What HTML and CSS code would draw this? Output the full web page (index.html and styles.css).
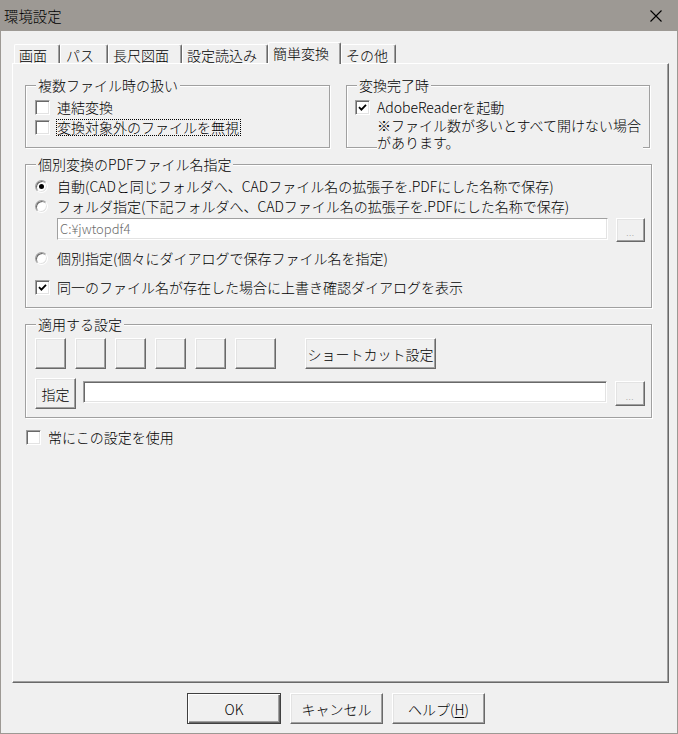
FILE: index.html
```html
<!DOCTYPE html>
<html lang="ja">
<head>
<meta charset="utf-8">
<title>環境設定</title>
<link rel="stylesheet" href="styles.css">
</head>
<body>
<div class="window">
  <div class="titlebar">
    <span class="title">環境設定</span>
    <svg class="close" width="12" height="12" viewBox="0 0 12 12"><path d="M0.5 0.5 L11.5 11.5 M11.5 0.5 L0.5 11.5" stroke="#000" stroke-width="1.1" fill="none"/></svg>
  </div>
  <div class="frame">
    <div class="tabs">
      <div class="tab t1">画面</div>
      <div class="tab t2">パス</div>
      <div class="tab t3">長尺図面</div>
      <div class="tab t4">設定読込み</div>
      <div class="tab t5 active">簡単変換</div>
      <div class="tab t6">その他</div>
    </div>
    <div class="panel">
      <div class="row-top">
        <div class="group g1">
          <div class="gtitle">複数ファイル時の扱い</div>
          <div class="opt first"><span class="box"></span><span>連結変換</span></div>
          <div class="opt"><span class="box"></span><span class="focus">変換対象外のファイルを無視</span></div>
        </div>
        <div class="group g2">
          <div class="gtitle">変換完了時</div>
          <div class="opt first"><span class="box on"><svg width="9" height="9" viewBox="0 0 9 9"><path d="M1 4.2 L3.4 6.6 L8 1.8" stroke="#000" stroke-width="1.8" fill="none"/></svg></span><span class="latin">AdobeReaderを起動</span></div>
          <div class="note">※ファイル数が多いとすべて開けない場合<br>があります。</div>
        </div>
      </div>

      <div class="group g3">
        <div class="gtitle">個別変換のPDFファイル名指定</div>
        <div class="opt first"><span class="rb on"></span><span>自動(CADと同じフォルダへ、CADファイル名の拡張子を.PDFにした名称で保存)</span></div>
        <div class="opt"><span class="rb"></span><span>フォルダ指定(下記フォルダへ、CADファイル名の拡張子を.PDFにした名称で保存)</span></div>
        <div class="pathrow">
          <div class="edit dis path">C:¥jwtopdf4</div>
          <div class="btn ell e1">...</div>
        </div>
        <div class="opt r3"><span class="rb"></span><span>個別指定(個々にダイアログで保存ファイル名を指定)</span></div>
        <div class="opt r4"><span class="box on"><svg width="9" height="9" viewBox="0 0 9 9"><path d="M1 4.2 L3.4 6.6 L8 1.8" stroke="#000" stroke-width="1.8" fill="none"/></svg></span><span>同一のファイル名が存在した場合に上書き確認ダイアログを表示</span></div>
      </div>

      <div class="group g4">
        <div class="gtitle">適用する設定</div>
        <div class="btnrow">
          <div class="btn sq"></div>
          <div class="btn sq"></div>
          <div class="btn sq"></div>
          <div class="btn sq"></div>
          <div class="btn sq"></div>
          <div class="btn sq wide"></div>
          <div class="btn shortcut">ショートカット設定</div>
        </div>
        <div class="specrow">
          <div class="btn spec">指定</div>
          <div class="edit specfield"></div>
          <div class="btn ell e2">...</div>
        </div>
      </div>

      <div class="opt always"><span class="box"></span><span>常にこの設定を使用</span></div>
    </div>
    <div class="footer">
      <div class="btn fbtn default">OK</div>
      <div class="btn fbtn">キャンセル</div>
      <div class="btn fbtn">ヘルプ(<u>H</u>)</div>
    </div>
  </div>
</div>
</body>
</html>
```
FILE: styles.css
```css
* { box-sizing: border-box; }
html, body { margin: 0; padding: 0; }
body {
  width: 678px;
  height: 734px;
  overflow: hidden;
  background: #f0f0f0;
  font-family: "Noto Sans CJK JP", "Noto Sans", sans-serif;
  font-size: 14px;
  font-weight: 300;
  color: #000;
}
.window {
  width: 678px;
  height: 734px;
  display: flex;
  flex-direction: column;
  background: #f0f0f0;
}
.titlebar {
  height: 31px;
  flex: none;
  background: #9d9994;
  display: flex;
  align-items: center;
  justify-content: space-between;
  padding: 0 16px 1px 4px;
}
.title { line-height: 17px; font-size: 14.4px; }
.close { display: block; margin-top: 1px; }

.frame {
  flex: 1;
  border: 1px solid #9d9994;
  border-top: 0;
  padding: 11px 8px 0 11px;
}

/* tabs */
.tabs {
  display: flex;
  align-items: flex-end;
  height: 21px;
  margin-left: 2px;
}
.tab {
  height: 19px;
  border-top: 1px solid #fff;
  border-left: 1px solid #fff;
  border-right: 1px solid #696969;
  box-shadow: inset -1px 0 #a0a0a0;
  border-radius: 2px 2px 0 0;
  padding: 2px 0 0 4px;
  line-height: 16px;
  white-space: nowrap;
}
.tab.active {
  height: 22px;
  margin-bottom: -1px;
  background: #f0f0f0;
  position: relative;
  z-index: 1;
  padding-left: 4px;
}
.t1 { width: 46px; }
.t2 { width: 48px; padding-left: 5px; }
.t3 { width: 74px; }
.t4 { width: 86px; }
.t5 { width: 73px; }
.t6 { width: 55px; }

/* panel */
.panel {
  height: 620px;
  border: 1px solid;
  border-color: #fff #696969 #696969 #fff;
  box-shadow: inset -1px -1px #a0a0a0;
  padding: 21px 0 0 12px;
}
.row-top {
  display: flex;
  gap: 16px;
  align-items: stretch;
}
.group {
  border: 1px solid #a0a0a0;
  box-shadow: 1px 1px 0 #fff, inset 1px 1px 0 #fff;
  padding: 0 0 10px 9px;
}
.g1 { width: 305px; }
.g2 { width: 304px; padding-left: 8px; }
.g3, .g4 { width: 627px; margin-top: 16px; }
.g4 { padding-bottom: 8px; }
.gtitle {
  width: fit-content;
  height: 16px;
  margin: -9px 0 0 1px;
  padding: 0 2px;
  line-height: 16px;
  background: #f0f0f0;
  white-space: nowrap;
}
.g2 .gtitle { margin-left: 2px; }

.opt {
  display: flex;
  align-items: center;
  height: 20px;
  white-space: nowrap;
}
.opt.first { margin-top: 4px; }
.opt.r3 { margin-top: 6px; }
.opt.r4 { margin-top: 9px; }

.box {
  width: 15px;
  height: 15px;
  flex: none;
  margin-right: 7px;
  background: #fff;
  border: 1px solid;
  border-color: #a0a0a0 #fff #fff #a0a0a0;
  box-shadow: inset 1px 1px #696969, inset -1px -1px #e3e3e3;
  display: flex;
  align-items: center;
  justify-content: center;
}
.box svg { display: block; }

.rb {
  width: 13px;
  height: 13px;
  flex: none;
  margin-right: 9px;
  border-radius: 50%;
  background: #fff;
  border: 1px solid;
  border-color: #a0a0a0 #fff #fff #a0a0a0;
  box-shadow: inset 1px 1px #696969, inset -1px -1px #e3e3e3;
  display: flex;
  align-items: center;
  justify-content: center;
}
.rb.on::after {
  content: "";
  width: 5px;
  height: 5px;
  border-radius: 50%;
  background: #000;
}

.focus {
  border: 1px dotted #000;
  line-height: 15px;
  margin-left: -1px;
  padding-right: 1px;
}

.note {
  width: 266px;
  margin: 0 0 -14px 22px;
  line-height: 17px;
  background: #f0f0f0;
  white-space: nowrap;
}

/* edits & buttons */
.edit {
  height: 22px;
  background: #fff;
  border: 1px solid;
  border-color: #a0a0a0 #fff #fff #a0a0a0;
  box-shadow: inset 1px 1px #696969, inset -1px -1px #e3e3e3;
}
.edit.dis {
  box-shadow: inset -1px -1px #e3e3e3;
  color: #6d6d6d;
  padding-left: 2px;
  line-height: 19px;
  font-size: 13px;
}
.pathrow {
  display: flex;
  gap: 8px;
  margin: 2px 0 0 22px;
}
.path { width: 551px; }

.btn {
  background: #f0f0f0;
  border: 1px solid;
  border-color: #fff #696969 #696969 #fff;
  box-shadow: inset -1px -1px #a0a0a0, inset 1px 1px #e3e3e3;
  display: flex;
  align-items: center;
  justify-content: center;
  white-space: nowrap;
  flex: none;
}
.ell {
  font-size: 9px;
  color: #a0a0a0;
  padding-top: 5px;
  letter-spacing: 0.5px;
}
.e1 { width: 29px; height: 24px; }
.e2 { width: 30px; height: 25px; margin-top: 3px; margin-left: 8px; }

.btnrow {
  display: flex;
  gap: 9px;
  margin-top: 6px;
  height: 31px;
}
.sq { width: 31px; height: 31px; }
.sq.wide { width: 41px; }
.shortcut { width: 131px; height: 31px; margin-left: 20px; }

.specrow {
  display: flex;
  align-items: flex-start;
  margin-top: 9px;
}
.spec { width: 41px; height: 31px; }
.specfield { width: 524px; margin: 3px 0 0 7px; }

.always { margin: 9px 0 0 1px; }

.footer {
  display: flex;
  gap: 9px;
  margin: 10px 0 0 175px;
}
.fbtn { width: 93px; height: 31px; }
.fbtn.default {
  width: 94px;
  border: 1px solid #404040;
  box-shadow: inset 1px 1px #fff, inset -1px -1px #696969, inset -2px -2px #a0a0a0;
}
.fbtn u { text-underline-offset: 2px; }
```
